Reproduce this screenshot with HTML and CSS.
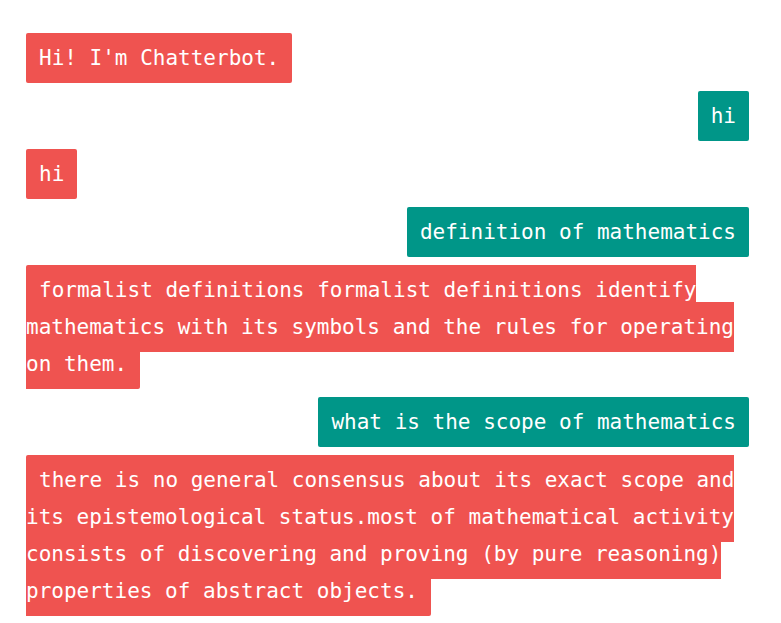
FILE: index.html
```html
<!DOCTYPE html>
<html lang="en">
<head>
<meta charset="utf-8">
<title>Chatterbot</title>
<link rel="stylesheet" href="styles.css">
</head>
<body>
<main class="chat">
<p class="message bot"><span>Hi! I'm Chatterbot.</span></p>
<p class="message user"><span>hi</span></p>
<p class="message bot"><span>hi</span></p>
<p class="message user"><span>definition of mathematics</span></p>
<p class="message bot"><span>formalist definitions formalist definitions identify mathematics with its symbols and the rules for operating on them.</span></p>
<p class="message user"><span>what is the scope of mathematics</span></p>
<p class="message bot"><span>there is no general consensus about its exact scope and its epistemological status.most of mathematical activity consists of discovering and proving (by pure reasoning) properties of abstract objects.</span></p>
</main>
</body>
</html>
```

FILE: styles.css
```css
body {
  margin: 0;
  background: #fff;
}

.chat {
  padding: 40px 32px 0 26px;
  font-family: "DejaVu Sans Mono", monospace;
  font-size: 21px;
  line-height: 37px;
}

.message {
  margin: 0 0 21px;
  color: #fff;
}

.message span {
  padding: 13px;
  border-radius: 2px;
}

.bot span {
  background: #ef5350;
}

.user {
  text-align: right;
}

.user span {
  background: #009688;
}
```
